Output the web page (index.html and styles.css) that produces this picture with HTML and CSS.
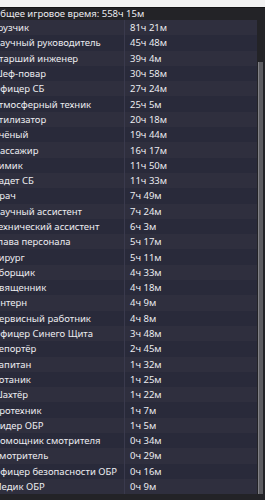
FILE: index.html
```html
<!DOCTYPE html>
<html lang="ru">
<head>
<meta charset="utf-8">
<link rel="stylesheet" href="styles.css">
</head>
<body>
<div class="topstrip"></div>
<div class="viewport">
  <div class="header">Общее игровое время: 558ч 15м</div>
  <div class="body">
    <div class="table">
      <div class="row"><span class="name">Грузчик</span><span class="time">81ч 21м</span></div>
      <div class="row"><span class="name">Научный руководитель</span><span class="time">45ч 48м</span></div>
      <div class="row"><span class="name">Старший инженер</span><span class="time">39ч 4м</span></div>
      <div class="row"><span class="name">Шеф-повар</span><span class="time">30ч 58м</span></div>
      <div class="row"><span class="name">Офицер СБ</span><span class="time">27ч 24м</span></div>
      <div class="row"><span class="name">Атмосферный техник</span><span class="time">25ч 5м</span></div>
      <div class="row"><span class="name">Утилизатор</span><span class="time">20ч 18м</span></div>
      <div class="row"><span class="name">Учёный</span><span class="time">19ч 44м</span></div>
      <div class="row"><span class="name">Пассажир</span><span class="time">16ч 17м</span></div>
      <div class="row"><span class="name">Химик</span><span class="time">11ч 50м</span></div>
      <div class="row"><span class="name">Кадет СБ</span><span class="time">11ч 33м</span></div>
      <div class="row"><span class="name">Врач</span><span class="time">7ч 49м</span></div>
      <div class="row"><span class="name">Научный ассистент</span><span class="time">7ч 24м</span></div>
      <div class="row"><span class="name">Технический ассистент</span><span class="time">6ч 3м</span></div>
      <div class="row"><span class="name">Глава персонала</span><span class="time">5ч 17м</span></div>
      <div class="row"><span class="name">Хирург</span><span class="time">5ч 11м</span></div>
      <div class="row"><span class="name">Уборщик</span><span class="time">4ч 33м</span></div>
      <div class="row"><span class="name">Священник</span><span class="time">4ч 18м</span></div>
      <div class="row"><span class="name">Интерн</span><span class="time">4ч 9м</span></div>
      <div class="row"><span class="name">Сервисный работник</span><span class="time">4ч 8м</span></div>
      <div class="row"><span class="name">Офицер Синего Щита</span><span class="time">3ч 48м</span></div>
      <div class="row"><span class="name">Репортёр</span><span class="time">2ч 45м</span></div>
      <div class="row"><span class="name">Капитан</span><span class="time">1ч 32м</span></div>
      <div class="row"><span class="name">Ботаник</span><span class="time">1ч 25м</span></div>
      <div class="row"><span class="name">Шахтёр</span><span class="time">1ч 22м</span></div>
      <div class="row"><span class="name">Эротехник</span><span class="time">1ч 7м</span></div>
      <div class="row"><span class="name">Лидер ОБР</span><span class="time">1ч 5м</span></div>
      <div class="row"><span class="name">Помощник смотрителя</span><span class="time">0ч 34м</span></div>
      <div class="row"><span class="name">Смотритель</span><span class="time">0ч 29м</span></div>
      <div class="row"><span class="name">Офицер безопасности ОБР</span><span class="time">0ч 16м</span></div>
      <div class="row"><span class="name">Медик ОБР</span><span class="time">0ч 9м</span></div>
    </div>
    <div class="track"><div class="thumb"></div></div>
  </div>
</div>
</body>
</html>
```

FILE: styles.css
```css
html, body {
  margin: 0;
  padding: 0;
  background: #232327;
  height: 100%;
  overflow: hidden;
}
body {
  font-family: "Noto Sans", "Open Sans", sans-serif;
  font-size: 9.5px;
  color: #ececf0;
}
.topstrip {
  height: 7px;
  background: #f2f2f2;
  border-bottom: 1px solid #141416;
}
.viewport {
  margin-left: -12px;
  display: flex;
  flex-direction: column;
}
.header {
  height: 12px;
  line-height: 12px;
  padding-left: 5px;
  white-space: nowrap;
}
.body {
  display: flex;
}
.table {
  width: 269px;
  display: grid;
  grid-auto-rows: 15.3px;
}
.row {
  display: grid;
  grid-template-columns: 136px 1fr;
  background: #2f2f3e;
}
.row:nth-child(even) {
  background: #292a3a;
}
.name, .time {
  display: flex;
  align-items: center;
  padding-left: 5px;
  white-space: nowrap;
  overflow: hidden;
}
.time {
  border-left: 1px solid #3a3a4d;
}
.track {
  width: 5px;
  margin-left: 1px;
  display: flex;
  flex-direction: column;
}
.thumb {
  flex: 1;
  margin-top: 42px;
  background: #5c5c61;
  border-left: 1px solid #828287;
}
```
